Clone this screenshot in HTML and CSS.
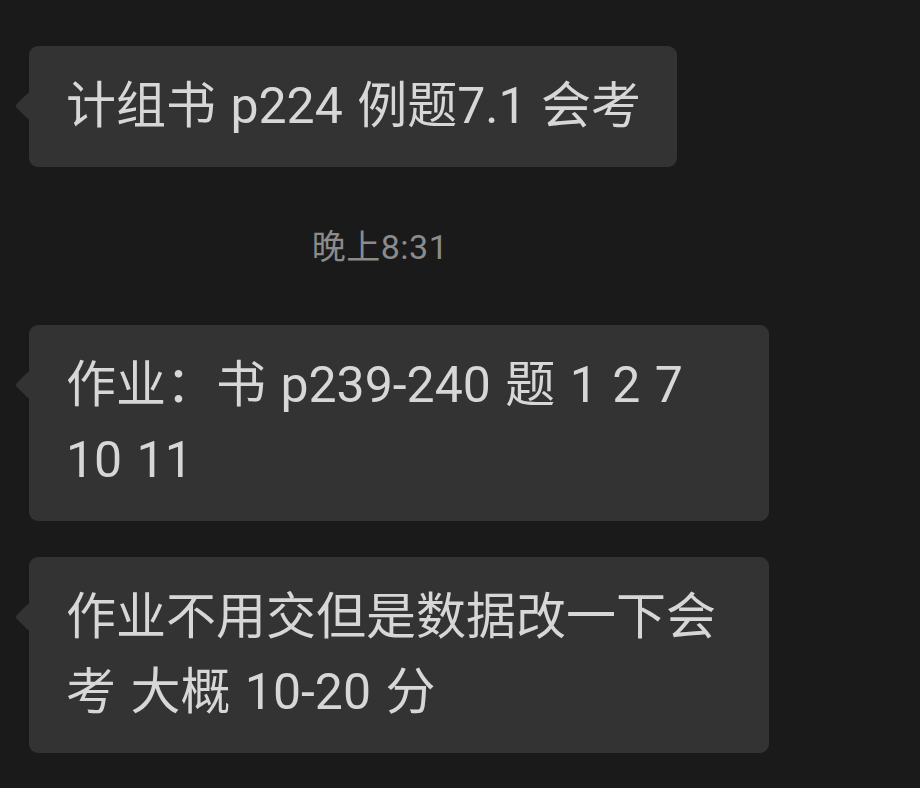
FILE: index.html
```html
<!DOCTYPE html>
<html lang="zh-CN">
<head>
<meta charset="utf-8">
<title>聊天</title>
<link rel="stylesheet" href="styles.css">
</head>
<body>
<div class="chat">
  <div class="msg">
    <div class="bubble">计组书 p224 例题7.1 会考</div>
  </div>
  <div class="time">晚上8:31</div>
  <div class="msg">
    <div class="bubble">作业：书 p239-240 题 1 2 7 10 11</div>
  </div>
  <div class="msg msg-next">
    <div class="bubble">作业不用交但是数据改一下会考 大概 10-20 分</div>
  </div>
</div>
</body>
</html>
```

FILE: styles.css
```css
html, body {
  margin: 0;
  padding: 0;
  background: #1a1a1a;
}

body {
  width: 920px;
  height: 788px;
  overflow: hidden;
  font-family: Roboto, "Noto Sans CJK SC", sans-serif;
}

.chat {
  padding: 46px 0 0 29px;
  display: flex;
  flex-direction: column;
}

.msg {
  display: flex;
}

.msg-next {
  margin-top: 36px;
}

.bubble {
  position: relative;
  box-sizing: border-box;
  max-width: 740px;
  padding: 23px 36px 23px 37px;
  background: #333333;
  border-radius: 9px;
  color: #d7d7d7;
  font-size: 50px;
  line-height: 75px;
  word-spacing: 2px;
}

.bubble::before {
  content: "";
  position: absolute;
  left: -10px;
  top: 50px;
  width: 20px;
  height: 20px;
  background: #333333;
  border-radius: 3px;
  transform: rotate(45deg);
}

.time {
  width: 702px;
  margin: 60px 0 58px;
  text-align: center;
  color: #8b8b8b;
  font-size: 34px;
  letter-spacing: 0.5px;
  line-height: 40px;
}
```
